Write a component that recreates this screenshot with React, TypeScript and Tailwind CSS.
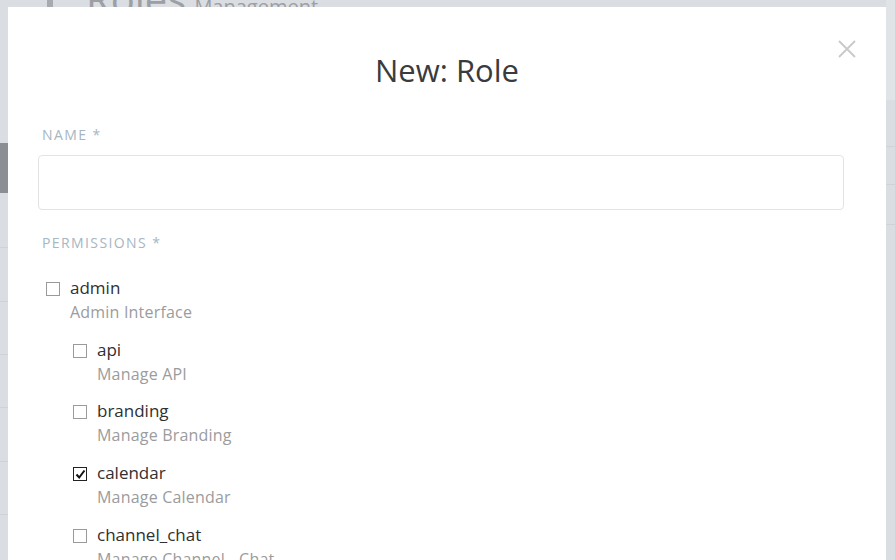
import React from 'react';

interface Permission {
  name: string;
  note: string;
  checked?: boolean;
  level: number;
}

const permissions: Permission[] = [
  { name: 'admin', note: 'Admin Interface', level: 0 },
  { name: 'api', note: 'Manage API', level: 1 },
  { name: 'branding', note: 'Manage Branding', level: 1 },
  { name: 'calendar', note: 'Manage Calendar', level: 1, checked: true },
  { name: 'channel_chat', note: 'Manage Channel - Chat', level: 1 },
  { name: 'channel_email', note: 'Manage Channel - Email', level: 1 },
];

const CheckBox: React.FC<{ checked?: boolean }> = ({ checked }) => (
  <span
    className={
      'mt-[6px] flex h-[14px] w-[14px] shrink-0 items-center justify-center border bg-white ' +
      (checked ? 'border-[#222]' : 'border-[#9a9a9a]')
    }
  >
    {checked && (
      <svg width="11" height="11" viewBox="0 0 11 11">
        <path d="M1.5 5.5 L4.2 8.5 L9.5 1.5" fill="none" stroke="#111" strokeWidth="2" />
      </svg>
    )}
  </span>
);

const PermissionRow: React.FC<{ item: Permission }> = ({ item }) => (
  <div className={'flex gap-[10px] ' + (item.level === 1 ? 'pl-[35px]' : 'pl-[8px]')}>
    <CheckBox checked={item.checked} />
    <div className="flex flex-col">
      <span className="text-[17px] leading-[24px] text-[#2f3031]">{item.name}</span>
      <span className="text-[16px] leading-[24px] tracking-[0.2px] text-[#9b9c9d]">{item.note}</span>
    </div>
  </div>
);

export default function App() {
  return (
    <div
      className="relative h-[560px] w-[895px] overflow-hidden bg-[#dadde1]"
      style={{ fontFamily: '"Open Sans", "Noto Sans", sans-serif' }}
    >
      {/* page behind the modal */}
      <div className="flex h-full">
        <div className="flex w-[8px] flex-col">
          <div className="h-[143px]" />
          <div className="h-[50px] bg-[#8b8e93]" />
          <div className="h-[55px] border-b border-[#cfd2d6]" />
          <div className="h-[54px] border-b border-[#cfd2d6]" />
          <div className="h-[53px] border-b border-[#cfd2d6]" />
          <div className="h-[53px] border-b border-[#cfd2d6]" />
          <div className="h-[54px] border-b border-[#cfd2d6]" />
          <div className="h-[53px] border-b border-[#cfd2d6]" />
        </div>
        <div className="flex flex-1 items-start gap-[8px] pl-[39px]">
          <div className="h-[8px] w-[6px] bg-[#a7aaae]" />
          <div className="-mt-[24px] flex items-baseline gap-[8px] pl-[25px] text-[#9c9fa3]">
            <span className="text-[40px] leading-[46px]">Roles</span>
            <span className="text-[20px]">Management</span>
          </div>
        </div>
        <div className="flex w-[9px] flex-col">
          <div className="h-[100px] bg-[#e1e4e7]" />
          <div className="h-[47px] border-b border-[#cfd2d6]" />
          <div className="h-[38px] border-b border-[#cfd2d6]" />
          <div className="h-[40px] border-b border-[#cfd2d6]" />
        </div>
      </div>

      {/* modal */}
      <div className="absolute left-[8px] top-[7px] h-[600px] w-[878px] bg-white pl-[30px] pr-[42px] pt-[45px]">
        <button className="absolute left-[830px] top-[33px] p-0">
          <svg width="18" height="18" viewBox="0 0 18 18">
            <path d="M1 1 L17 17 M17 1 L1 17" stroke="#c9c9c9" strokeWidth="1.8" fill="none" />
          </svg>
        </button>
        <h1 className="-mr-[12px] text-center text-[31px] leading-[36px] text-[#3a3b3c]">New: Role</h1>

        <div className="mt-[37px] pl-[4px] text-[14px] leading-[20px] tracking-[1.4px] text-[#a6b6c2]">NAME *</div>
        <div className="mt-[10px] h-[55px] rounded-[4px] border border-[#e3e3e3]" />

        <div className="mt-[23px] pl-[4px] text-[14px] leading-[20px] tracking-[1.4px] text-[#a6b6c2]">PERMISSIONS *</div>

        <div className="mt-[23px] flex flex-col gap-[13.7px]">
          {permissions.map((p) => (
            <PermissionRow key={p.name} item={p} />
          ))}
        </div>
      </div>
    </div>
  );
}
